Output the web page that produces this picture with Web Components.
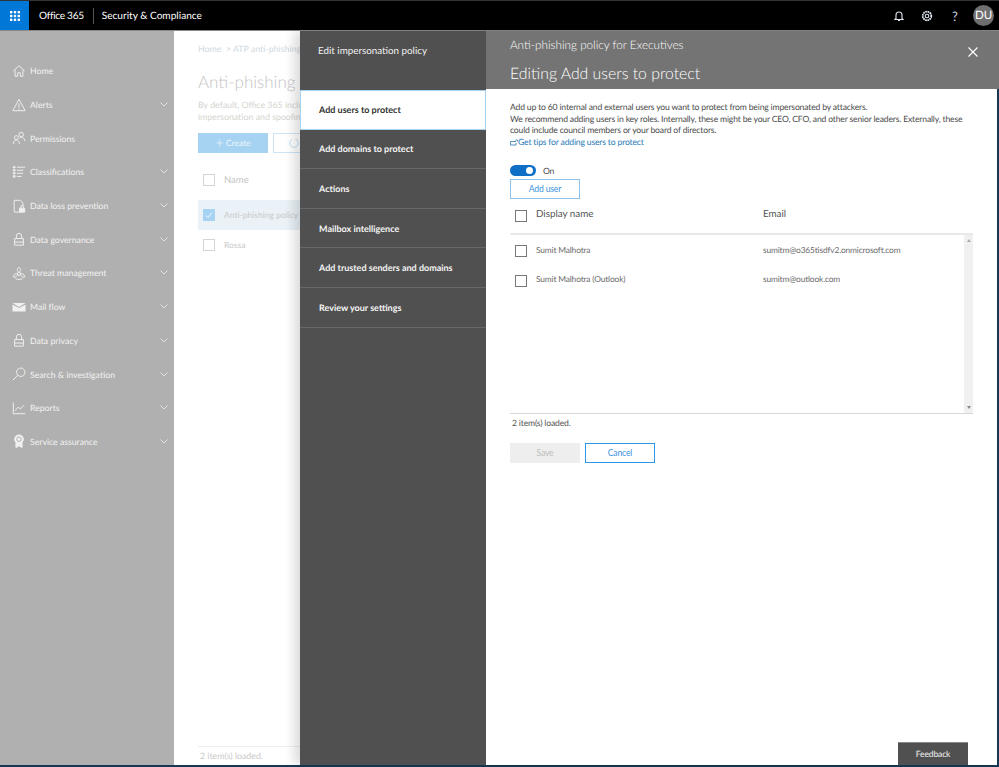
<!DOCTYPE html>
<html>
<head>
<meta charset="utf-8">
<title>Security &amp; Compliance</title>
<style>
  html, body { margin: 0; height: 100%; overflow: hidden; }
  body { font-family: Lato, "Liberation Sans", sans-serif; background: #fff; text-rendering: geometricPrecision; }
</style>
</head>
<body>
<app-frame>
  <top-bar slot="top"></top-bar>
  <side-nav slot="nav">
    <nav-item icon="home">Home</nav-item>
    <nav-item icon="alert" more>Alerts</nav-item>
    <nav-item icon="people">Permissions</nav-item>
    <nav-item icon="list" more>Classifications</nav-item>
    <nav-item icon="doclock" more>Data loss prevention</nav-item>
    <nav-item icon="lock" more>Data governance</nav-item>
    <nav-item icon="bio" more>Threat management</nav-item>
    <nav-item icon="mail" more>Mail flow</nav-item>
    <nav-item icon="lock" more>Data privacy</nav-item>
    <nav-item icon="search" more>Search &amp; investigation</nav-item>
    <nav-item icon="chart" more>Reports</nav-item>
    <nav-item icon="badge" more>Service assurance</nav-item>
  </side-nav>
  <back-page slot="page"></back-page>
  <policy-panel slot="panel">
    <step-nav slot="steps">
      <step-item active>Add users to protect</step-item>
      <step-item>Add domains to protect</step-item>
      <step-item>Actions</step-item>
      <step-item>Mailbox intelligence</step-item>
      <step-item>Add trusted senders and domains</step-item>
      <step-item>Review your settings</step-item>
    </step-nav>
    <users-form slot="form"></users-form>
  </policy-panel>
</app-frame>

<script>
// icons for the left nav, all on a 16x16 box
const ICONS = {
  home: '<path d="M1.5 8 8 2l6.5 6M3.5 7v7h3v-4h3v4h3V7"/>',
  alert: '<path d="M8 1.5 15 14.5H1zM8 6v5M8 12v1.2"/>',
  people: '<circle cx="10.5" cy="4" r="2.5"/><circle cx="5" cy="7.5" r="2.2"/><path d="M1.5 15c0-3 1.5-4.6 3.5-4.6S8.500 12 8.500 15M9 8.500c.5-1 .9-1.500 1.500-1.500 2.200 0 4 1.500 4 4.500"/>',
  list: '<path d="M1 2.500h3M1 6h3M1 9.500h3M1 13h3" stroke-width="2.400"/><path d="M5.500 2.500H15M5.500 6H13M5.500 9.500h7M5.500 13H11"/>',
  doclock: '<path d="M9 15H2.500V1.500h7l3 3V8"/><path d="M8.500 10.500h6v4.500h-6z" fill="#f0f0f0"/><path d="M10 10.500V9a1.500 1.500 0 0 1 3 0v1.500"/>',
  lock: '<path d="M3 7.500h10V15H3zM5 7.500V4.500a3 3 0 0 1 6 0v3"/><path d="M3 11.500h10"/>',
  bio: '<circle cx="8" cy="9" r="1.800"/><path d="M8 1.500C5.500 3 5.500 6 8 7.200 10.500 6 10.500 3 8 1.500zM1.500 12.500c.2-3 2.800-4.500 5-3.500-.1 2.500-2.600 4.500-5 3.500zM14.500 12.500c-.2-3-2.800-4.500-5-3.500.1 2.500 2.600 4.500 5 3.500z"/><path d="M4 14.500c2.500 1 5.500 1 8 0"/>',
  mail: '<path d="M.500 3.500h15L8 8z" fill="#f0f0f0" stroke="none"/><path d="M.500 5 8 9.200 15.500 5v8H.500z" fill="#f0f0f0" stroke="none"/>',
  search: '<circle cx="10" cy="6" r="4.800"/><path d="M6.500 9.500 1 15"/>',
  chart: '<path d="M1.500 1.500V14.500H15M3.500 11l3.500-4 2.500 2L14 4.500"/>',
  badge: '<path d="M4.500 9.500V15.500L8 13.500l3.500 2v-6" fill="#f0f0f0"/><circle cx="8" cy="6" r="5" fill="#f0f0f0"/><circle cx="8" cy="6" r="2.500" stroke="#b0b0b0"/>'
};

class AppFrame extends HTMLElement {
  constructor() {
    super();
    this.attachShadow({ mode: "open" }).innerHTML = `
      <style>
        :host { display: flex; flex-direction: column; height: 767px; width: 999px; border-top: 1px solid #333; border-bottom: 2px solid #123a57; box-sizing: border-box; }
        .main { flex: 1; display: flex; position: relative; min-height: 0; }
        .panel { position: absolute; left: 300px; top: 0; right: 0; bottom: 0; display: flex; box-shadow: -6px 0 10px rgba(0,0,0,.14); }
        .edge { position: absolute; right: 0; top: 58px; bottom: 0; width: 2px; background: #123a57; }
      </style>
      <slot name="top"></slot>
      <div class="main">
        <slot name="nav"></slot>
        <slot name="page"></slot>
        <div class="panel"><slot name="panel"></slot></div>
        <div class="edge"></div>
      </div>`;
  }
}

class TopBar extends HTMLElement {
  constructor() {
    super();
    let dots = "";
    for (const y of [0, 3.500, 7]) for (const x of [0, 3.500, 7]) dots += `<rect x="${x}" y="${y}" width="2.200" height="2.200"/>`;
    this.attachShadow({ mode: "open" }).innerHTML = `
      <style>
        :host { display: flex; align-items: center; height: 30px; box-sizing: border-box; background: #000; color: #fff; font-size: 10.100px; flex: none; border-bottom: 1px solid #8a8a8a; }
        .waffle { width: 29px; height: 29px; background: #0078d7; display: flex; align-items: center; justify-content: center; }
        .brand { margin-left: 10px; padding-right: 9px; border-right: 1px solid #555; line-height: 16px; letter-spacing: -.3px; }
        .app { margin-left: 8px; }
        .tools { margin-left: auto; display: flex; align-items: center; margin-right: 5px; }
        .tools svg { fill: none; stroke: #dfe6ee; stroke-width: 1.100; }
        .tool { width: 28px; display: flex; justify-content: center; }
        .help { font-size: 13px; color: #c9d6e4; line-height: 16px; }
        .me { width: 21px; height: 21px; border-radius: 50%; background: #6f6f6f; font-size: 11.500px; line-height: 21px; text-align: center; margin-left: 4px; }
      </style>
      <div class="waffle"><svg width="10" height="10" viewBox="0 0 9.200 9.200" fill="#fff">${dots}</svg></div>
      <span class="brand">Office 365</span>
      <span class="app">Security &amp; Compliance</span>
      <div class="tools">
        <div class="tool"><svg width="12" height="12" viewBox="0 0 12 12"><path d="M3 8.500V5a3 3 0 0 1 6 0v3.500l1 1H2zM5 10.500h2" /></svg></div>
        <div class="tool"><svg width="12" height="12" viewBox="0 0 12 12"><circle cx="6" cy="6" r="1.800"/><circle cx="6" cy="6" r="4.300" stroke-width="1.800" stroke-dasharray="1.700 .55"/></svg></div>
        <div class="tool help">?</div>
        <div class="me">DU</div>
      </div>`;
  }
}

class SideNav extends HTMLElement {
  constructor() {
    super();
    this.attachShadow({ mode: "open" }).innerHTML = `
      <style>
        :host { display: flex; flex-direction: column; width: 174px; flex: none; background: #b0b0b0; padding-top: 23px; box-sizing: border-box; }
      </style>
      <slot></slot>`;
  }
}

class NavItem extends HTMLElement {
  constructor() {
    super();
    const icon = ICONS[this.getAttribute("icon")] || "";
    const more = this.hasAttribute("more");
    this.attachShadow({ mode: "open" }).innerHTML = `
      <style>
        :host { display: flex; align-items: center; height: 33.700px; padding-left: 12px; color: #f2f2f2; font-size: 8.700px; box-sizing: border-box; }
        .icon { fill: none; stroke: #f0f0f0; stroke-width: 1.100; width: 14px; height: 14px; margin-right: 4px; flex: none; }
        .chev { margin-left: auto; margin-right: 6px; fill: none; stroke: #e2e2e2; stroke-width: 1; }
      </style>
      <svg class="icon" viewBox="0 0 16 16">${icon}</svg>
      <slot></slot>
      ${more ? '<svg class="chev" width="8" height="5" viewBox="0 0 8 5"><path d="M.500.500 4 4 7.500.500"/></svg>' : ""}`;
  }
}

class BackPage extends HTMLElement {
  constructor() {
    super();
    this.attachShadow({ mode: "open" }).innerHTML = `
      <style>
        :host { flex: 1; display: flex; flex-direction: column; padding: 12px 0 0 24px; box-sizing: border-box; min-width: 0; color: #c9c9c9; font-size: 8.800px; white-space: nowrap; overflow: hidden; background: #fff; }
        .crumb { line-height: 12px; color: #cfd8e2; }
        h1 { font-weight: 300; font-size: 17px; line-height: 24px; margin: 15px 0 0; color: #c4c4c4; }
        p { margin: 5px 0 0; line-height: 11.700px; color: #d4d4ce; }
        .btns { display: flex; gap: 5px; margin-top: 11px; }
        .create { width: 70px; height: 20px; background: #a6d3f2; color: #eef7fd; display: flex; align-items: center; justify-content: center; gap: 2px; flex: none; font-size: 8.500px; }
        .plus { font-size: 15px; line-height: 12px; font-weight: 300; }
        .refresh { width: 100px; height: 20px; border: 1px solid #cde4f6; box-sizing: border-box; flex: none; display: flex; align-items: center; padding-left: 15px; }
        .row { display: flex; align-items: center; height: 30px; padding-left: 5px; gap: 9px; font-size: 8.500px; }
        .head { margin-top: 12px; color: #c4c4c4; font-size: 9.500px; }
        .sel { background: #eaf2f7; margin-top: 5px; }
        .box { width: 12px; height: 12px; border: 1px solid #d5d5d5; box-sizing: border-box; flex: none; }
        .on { background: #a6d3f2; border-color: #a6d3f2; display: flex; align-items: center; justify-content: center; }
        .foot { margin-top: auto; border-top: 1px solid #eee; height: 18px; line-height: 17px; padding-left: 2px; }
      </style>
      <div class="crumb">Home &nbsp;&gt; ATP anti-phishing</div>
      <h1>Anti-phishing</h1>
      <p>By default, Office 365 includes<br>impersonation and spoofing</p>
      <div class="btns">
        <div class="create"><span class="plus">+</span>Create</div>
        <div class="refresh"><svg width="10" height="10" viewBox="0 0 10 10" fill="none" stroke="#bcdcf3"><path d="M6.500 1A4.300 4.300 0 1 1 3 1.200"/></svg></div>
      </div>
      <div class="row head"><span class="box"></span>Name</div>
      <div class="row sel"><span class="box on"><svg width="8" height="8" viewBox="0 0 8 8" fill="none" stroke="#eef7fd"><path d="M1 4.500 3 6.500 7 1.500"/></svg></span>Anti-phishing policy for</div>
      <div class="row"><span class="box"></span>Rossa</div>
      <div class="foot">2 item(s) loaded.</div>`;
  }
}

class PolicyPanel extends HTMLElement {
  constructor() {
    super();
    this.attachShadow({ mode: "open" }).innerHTML = `
      <style>
        :host { flex: 1; display: flex; min-width: 0; height: 100%; }
        .left { width: 186px; flex: none; background: #505050; color: #f0f0f0; display: flex; flex-direction: column; }
        .left h2 { margin: 0; height: 59px; box-sizing: border-box; padding: 14px 0 0 18px; font-weight: 400; font-size: 9.800px; line-height: 13px; }
        .right { flex: 1; min-width: 0; display: flex; flex-direction: column; background: #fff; position: relative; }
        .head { height: 58px; background: #747474; color: #fff; padding: 7px 0 0 24px; box-sizing: border-box; flex: none; position: relative; }
        .pol { font-size: 11.700px; line-height: 15px; font-weight: 300; }
        .tit { font-size: 15.800px; line-height: 20px; margin-top: 11px; font-weight: 300; }
        .close { position: absolute; right: 21px; top: 16px; }
      </style>
      <div class="left">
        <h2>Edit impersonation policy</h2>
        <slot name="steps"></slot>
      </div>
      <div class="right">
        <div class="head">
          <div class="pol">Anti-phishing policy for Executives</div>
          <div class="tit">Editing Add users to protect</div>
          <svg class="close" width="10" height="10" viewBox="0 0 10 10" stroke="#fff" stroke-width="1.100"><path d="M.500.500l9 9M9.500.500l-9 9"/></svg>
        </div>
        <slot name="form"></slot>
      </div>`;
  }
}

class StepNav extends HTMLElement {
  constructor() {
    super();
    this.attachShadow({ mode: "open" }).innerHTML = `
      <style>:host { display: flex; flex-direction: column; }</style>
      <slot></slot>`;
  }
}

class StepItem extends HTMLElement {
  constructor() {
    super();
    this.attachShadow({ mode: "open" }).innerHTML = `
      <style>
        :host { display: flex; align-items: center; height: 39.600px; box-sizing: border-box; padding-left: 19px; font-size: 9px; font-weight: 700; color: #f4f4f4; border-bottom: 1px solid #686868; }
        :host([active]) { background: #fff; color: #333; border: 1px solid #a6d3f2; padding-left: 18px; }
      </style>
      <slot></slot>`;
  }
}

class UsersForm extends HTMLElement {
  constructor() {
    super();
    this.attachShadow({ mode: "open" }).innerHTML = `
      <style>
        :host { flex: 1; display: flex; flex-direction: column; padding: 13px 26px 0 24px; box-sizing: border-box; font-size: 8.600px; letter-spacing: -.17px; color: #4c4c4c; position: relative; min-height: 0; }
        p { margin: 0; line-height: 11.700px; white-space: nowrap; }
        a { color: #2a7ab8; text-decoration: none; display: flex; align-items: center; gap: 0; height: 11.700px; line-height: 11.700px; }
        .toggle { display: flex; align-items: center; gap: 7px; margin-top: 16px; height: 12px; }
        .track { width: 26px; height: 11px; border-radius: 6px; background: #0f6fc6; position: relative; }
        .knob { position: absolute; right: 3px; top: 2px; width: 7px; height: 7px; border-radius: 50%; background: #fff; }
        button { font: inherit; letter-spacing: inherit; width: 70px; height: 20px; background: #fff; box-sizing: border-box; padding: 0; color: #3a93e0; flex: none; }
        .add { border: 1px solid #8cc4ef; margin-top: 2px; }
        .grid-head, .row { display: grid; grid-template-columns: 21px 227px 1fr; align-items: center; padding-left: 5px; }
        .grid-head { height: 36px; font-size: 9.800px; letter-spacing: 0; color: #555; border-bottom: 2px solid #e8e8e8; padding-bottom: 3px; box-sizing: border-box; flex: none; }
        .box { width: 12px; height: 12px; border: 1px solid #777; box-sizing: border-box; margin-top: 3px; }
        .list { height: 179px; border-bottom: 1px solid #d8d8d8; display: flex; box-sizing: border-box; flex: none; }
        .rows { flex: 1; }
        .row { height: 29.500px; color: #6c6c6c; font-size: 8.400px; letter-spacing: -.15px; }
        .bar { width: 9px; background: #f0f0f0; display: flex; flex-direction: column; justify-content: space-between; align-items: center; padding: 4px 0; box-sizing: border-box; }
        .arrow { width: 0; height: 0; border-left: 2px solid transparent; border-right: 2px solid transparent; }
        .up { border-bottom: 3px solid #aaa; }
        .down { border-top: 3px solid #888; }
        .count { margin: 3px 0 0 2px; line-height: 12px; color: #555; }
        .acts { display: flex; gap: 5px; margin-top: 14px; }
        .save { background: #eee; border: none; color: #bdbdbd; }
        .cancel { border: 1px solid #2f96e8; }
        .feedback { position: absolute; right: 31px; bottom: 0; width: 70px; height: 23px; padding-bottom: 1px; background: #505050; color: #f0f0f0; display: flex; align-items: center; justify-content: center; border-top: 1px solid #888; box-sizing: border-box; }
      </style>
      <p>Add up to 60 internal and external users you want to protect from being impersonated by attackers.</p>
      <p>We recommend adding users in key roles. Internally, these might be your CEO, CFO, and other senior leaders. Externally, these</p>
      <p>could include council members or your board of directors.</p>
      <a href="#"><svg width="8" height="7" viewBox="0 0 8 7" fill="none" stroke="#2a7ab8" stroke-width=".8"><path d="M6 2.500H.500v3.500h5.500V4M5.500 1h2v1.500"/></svg>Get tips for adding users to protect</a>
      <div class="toggle"><span class="track"><span class="knob"></span></span><span>On</span></div>
      <button class="add">Add user</button>
      <div class="grid-head"><span class="box"></span><span>Display name</span><span>Email</span></div>
      <div class="list">
        <div class="rows">
          <div class="row"><span class="box"></span><span>Sumit Malhotra</span><span>sumitm@o365tisdfv2.onmicrosoft.com</span></div>
          <div class="row"><span class="box"></span><span>Sumit Malhotra (Outlook)</span><span>sumitm@outlook.com</span></div>
        </div>
        <div class="bar"><span class="arrow up"></span><span class="arrow down"></span></div>
      </div>
      <div class="count">2 item(s) loaded.</div>
      <div class="acts"><button class="save">Save</button><button class="cancel">Cancel</button></div>
      <div class="feedback">Feedback</div>`;
  }
}

customElements.define("app-frame", AppFrame);
customElements.define("top-bar", TopBar);
customElements.define("side-nav", SideNav);
customElements.define("nav-item", NavItem);
customElements.define("back-page", BackPage);
customElements.define("policy-panel", PolicyPanel);
customElements.define("step-nav", StepNav);
customElements.define("step-item", StepItem);
customElements.define("users-form", UsersForm);
</script>
</body>
</html>
